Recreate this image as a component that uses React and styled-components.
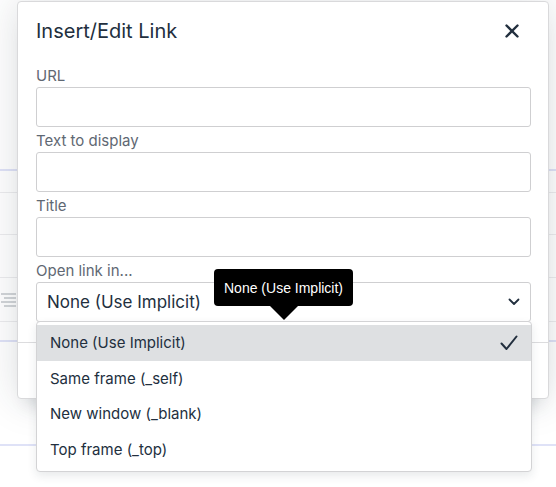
import React from "react";
import styled, { createGlobalStyle, css } from "styled-components";

const GlobalStyle = createGlobalStyle`
    * { box-sizing: border-box; }
    body {
        margin: 0;
        background: #fff;
        font-family: "Inter", "Liberation Sans", sans-serif;
        color: #222f3e;
    }
`;

const targets = [
    { id: "none", label: "None (Use Implicit)" },
    { id: "self", label: "Same frame (_self)" },
    { id: "blank", label: "New window (_blank)" },
    { id: "top", label: "Top frame (_top)" },
];

const bgRows = [
    { h: 171, tone: "accent" },
    { h: 22 },
    { h: 42 },
    { h: 43 },
    { h: 44, icon: true },
    { h: 20, tone: "accent" },
    { h: 104, tone: "accent" },
];

const CloseIcon = () => (
    <svg width="14" height="14" viewBox="0 0 14 14">
        <path d="M1.5 1.5 L12.5 12.5 M12.5 1.5 L1.5 12.5" stroke="#222f3e" strokeWidth="2.4" strokeLinecap="round" />
    </svg>
);

const ChevronIcon = () => (
    <svg width="12" height="8" viewBox="0 0 12 8">
        <path d="M1.5 1.5 L6 6 L10.5 1.5" fill="none" stroke="#222f3e" strokeWidth="1.8" strokeLinecap="round" strokeLinejoin="round" />
    </svg>
);

const CheckIcon = () => (
    <svg width="18" height="16" viewBox="0 0 18 16">
        <path d="M1.5 8.5 L6.5 14 L16.5 1.5" fill="none" stroke="#222f3e" strokeWidth="2" strokeLinecap="round" strokeLinejoin="round" />
    </svg>
);

const AlignIcon = () => (
    <svg width="16" height="14" viewBox="0 0 16 14">
        <path d="M0 1 H15 M3 5 H15 M0 9 H15 M3 13 H15" stroke="#c4c7cc" strokeWidth="1.5" />
    </svg>
);

const Field = ({ label }) => (
    <StyledField>
        <StyledLabel>{label}</StyledLabel>
        <StyledInput />
    </StyledField>
);

const App = () => {
    const selected = "none";

    return (
        <>
            <GlobalStyle />
            <StyledPage>
                <StyledEditorBg>
                    {bgRows.map((row, i) => (
                        <StyledBgRow key={i} $h={row.h} $accent={row.tone === "accent"}>
                            {row.icon && <AlignIcon />}
                        </StyledBgRow>
                    ))}
                </StyledEditorBg>

                <StyledDialog>
                    <StyledHeader>
                        <StyledTitle>Insert/Edit Link</StyledTitle>
                        <StyledCloseButton aria-label="Close"><CloseIcon /></StyledCloseButton>
                    </StyledHeader>
                    <StyledBody>
                        <Field label="URL" />
                        <Field label="Text to display" />
                        <Field label="Title" />
                        <StyledField>
                            <StyledLabel>Open link in...</StyledLabel>
                            <StyledSelect>
                                <span>None (Use Implicit)</span>
                                <ChevronIcon />
                            </StyledSelect>
                        </StyledField>
                    </StyledBody>
                    <StyledFooter />
                </StyledDialog>

                <StyledMenu>
                    {targets.map(t => (
                        <StyledMenuItem key={t.id} $active={t.id === selected}>
                            <span>{t.label}</span>
                            {t.id === selected && <CheckIcon />}
                        </StyledMenuItem>
                    ))}
                </StyledMenu>

                <StyledTooltip>None (Use Implicit)</StyledTooltip>
            </StyledPage>
        </>
    );
};

export default App;

const StyledPage = styled.div`
    position: relative;
    width: 556px;
    height: 487px;
    overflow: hidden;
    background: #fff;
`;

const StyledEditorBg = styled.div`
    display: flex;
    flex-direction: column;
`;

const StyledBgRow = styled.div`
    height: ${props => props.$h}px;
    display: flex;
    align-items: center;
    padding-left: 1px;
    border-bottom: 1px solid #ececee;
    ${props => props.$accent && css`
        border-bottom: 2px solid #dfe2f7;
    `}
`;

const StyledDialog = styled.div`
    position: absolute;
    left: 17px;
    top: 1px;
    width: 532px;
    height: 398px;
    display: flex;
    flex-direction: column;
    background: #fff;
    border: 1px solid #d9d9db;
    border-radius: 4px;
    box-shadow: 0 16px 16px -10px rgba(34, 47, 62, 0.15), 0 0 40px 1px rgba(34, 47, 62, 0.15);
`;

const StyledHeader = styled.div`
    height: 57px;
    display: flex;
    align-items: center;
    justify-content: space-between;
    padding: 0 24px 0 18px;
`;

const StyledTitle = styled.h1`
    margin: 0;
    font-size: 20px;
    font-weight: 400;
    line-height: 24px;
    color: #222f3e;
`;

const StyledCloseButton = styled.button`
    width: 24px;
    height: 24px;
    padding: 0;
    border: none;
    background: transparent;
    display: flex;
    align-items: center;
    justify-content: center;
`;

const StyledBody = styled.div`
    display: flex;
    flex-direction: column;
    gap: 4px;
    padding: 7px 17px 20px 18px;
`;

const StyledField = styled.div`
    display: flex;
    flex-direction: column;
`;

const StyledLabel = styled.label`
    font-size: 15px;
    line-height: 20px;
    margin-bottom: 1px;
    color: #5f6873;
`;

const StyledInput = styled.input`
    height: 40px;
    width: 100%;
    border: 1px solid #cfcfd1;
    border-radius: 3px;
    background: #fff;
    font-family: inherit;
    font-size: 16px;
    padding: 0 10px;
`;

const StyledSelect = styled.div`
    height: 40px;
    display: flex;
    align-items: center;
    justify-content: space-between;
    padding: 0 10px;
    border: 1px solid #cfcfd1;
    border-radius: 3px;
    font-size: 17px;
    color: #222f3e;
`;

const StyledFooter = styled.div`
    flex: 1;
    border-top: 1px solid #dcdcde;
`;

const StyledMenu = styled.div`
    position: absolute;
    left: 36px;
    top: 321px;
    width: 496px;
    padding: 3px 0 4px;
    background: #fff;
    border: 1px solid #d3d3d5;
    border-radius: 4px;
    box-shadow: 0 4px 10px rgba(34, 47, 62, 0.1);
`;

const StyledMenuItem = styled.div`
    height: 35.5px;
    display: flex;
    align-items: center;
    justify-content: space-between;
    padding: 0 13px;
    font-size: 15px;
    color: #222f3e;
    background: ${props => props.$active ? "#dee0e2" : "transparent"};
`;

const StyledTooltip = styled.div`
    position: absolute;
    left: 214px;
    top: 269px;
    height: 37px;
    padding: 0 10px;
    display: flex;
    align-items: center;
    background: #000;
    color: #fff;
    border-radius: 4px;
    font-family: "Liberation Sans", Arial, sans-serif;
    font-size: 14px;

    &::after {
        content: "";
        position: absolute;
        left: 50%;
        bottom: -14px;
        margin-left: -14px;
        border-left: 14px solid transparent;
        border-right: 14px solid transparent;
        border-top: 14px solid #000;
    }
`;
